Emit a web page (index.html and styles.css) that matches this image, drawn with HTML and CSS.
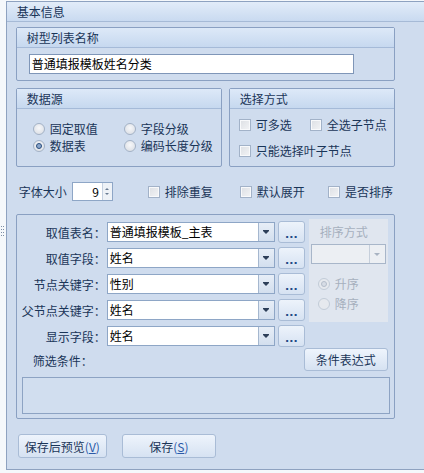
FILE: index.html
```html
<!DOCTYPE html>
<html lang="zh">
<head>
    <meta charset="UTF-8">
    <title>基本信息</title>
    <link rel="stylesheet" href="styles.css">
</head>
<body>
<div class="page">
    <div class="grip">
        <svg width="4" height="14" viewBox="0 0 4 14">
            <rect x="0" y="1" width="1" height="1" fill="#7d8ea6"/>
            <rect x="0" y="4" width="1" height="1" fill="#7d8ea6"/>
            <rect x="0" y="7" width="1" height="1" fill="#7d8ea6"/>
            <rect x="0" y="10" width="1" height="1" fill="#7d8ea6"/>
            <rect x="2" y="1" width="1" height="1" fill="#7d8ea6"/>
            <rect x="2" y="4" width="1" height="1" fill="#7d8ea6"/>
            <rect x="2" y="7" width="1" height="1" fill="#7d8ea6"/>
            <rect x="2" y="10" width="1" height="1" fill="#7d8ea6"/>
        </svg>
    </div>

    <div class="panel">
        <div class="panel-head">基本信息</div>
        <div class="panel-body">

            <div class="group name-group">
                <div class="group-head">树型列表名称</div>
                <div class="group-body">
                    <div class="textbox">普通填报模板姓名分类</div>
                </div>
            </div>

            <div class="pair">
                <div class="group source-group">
                    <div class="group-head">数据源</div>
                    <div class="group-body source-grid">
                        <div class="opt"><span class="radio"></span>固定取值</div>
                        <div class="opt"><span class="radio"></span>字段分级</div>
                        <div class="opt"><span class="radio checked"></span>数据表</div>
                        <div class="opt"><span class="radio"></span>编码长度分级</div>
                    </div>
                </div>
                <div class="group mode-group">
                    <div class="group-head">选择方式</div>
                    <div class="group-body mode-grid">
                        <div class="opt"><span class="check"></span>可多选</div>
                        <div class="opt"><span class="check"></span>全选子节点</div>
                        <div class="opt wide"><span class="check"></span>只能选择叶子节点</div>
                    </div>
                </div>
            </div>

            <div class="font-row">
                <span class="label">字体大小</span>
                <div class="spinner">
                    <span class="spin-value">9</span>
                    <span class="spin-arrows"><i class="up"></i><i class="down"></i></span>
                </div>
                <div class="opt dedupe"><span class="check"></span>排除重复</div>
                <div class="opt expand"><span class="check"></span>默认展开</div>
                <div class="opt sort"><span class="check"></span>是否排序</div>
            </div>

            <div class="group field-group">
                <div class="field-top">
                    <div class="fields">
                        <span class="field-label">取值表名：</span>
                        <div class="combo"><span class="combo-text">普通填报模板_主表</span><span class="combo-btn"></span></div>
                        <button class="dots">...</button>

                        <span class="field-label">取值字段：</span>
                        <div class="combo"><span class="combo-text">姓名</span><span class="combo-btn"></span></div>
                        <button class="dots">...</button>

                        <span class="field-label">节点关键字：</span>
                        <div class="combo"><span class="combo-text">性别</span><span class="combo-btn"></span></div>
                        <button class="dots">...</button>

                        <span class="field-label">父节点关键字：</span>
                        <div class="combo"><span class="combo-text">姓名</span><span class="combo-btn"></span></div>
                        <button class="dots">...</button>

                        <span class="field-label">显示字段：</span>
                        <div class="combo"><span class="combo-text">姓名</span><span class="combo-btn"></span></div>
                        <button class="dots">...</button>
                    </div>

                    <div class="sort-box">
                        <div class="sort-title">排序方式</div>
                        <div class="combo disabled"><span class="combo-text"></span><span class="combo-btn"></span></div>
                        <div class="sort-opts">
                            <div class="opt"><span class="radio checked"></span>升序</div>
                            <div class="opt"><span class="radio"></span>降序</div>
                        </div>
                    </div>
                </div>

                <div class="filter-row">
                    <span class="filter-label">筛选条件：</span>
                    <button class="btn expr-btn">条件表达式</button>
                </div>
                <div class="filter-box"></div>
            </div>

            <div class="actions">
                <button class="btn preview-btn">保存后预览<span class="key">(<u>V</u>)</span></button>
                <button class="btn save-btn">保存<span class="key">(<u>S</u>)</span></button>
            </div>

        </div>
    </div>
</div>
</body>
</html>
```

FILE: styles.css
```css
* {
    box-sizing: border-box;
}
body {
    margin: 0;
    background: #f5f8fb;
    font-family: "Noto Sans CJK SC", "Noto Sans", sans-serif;
    font-size: 12px;
    line-height: 17px;
    color: #1a3558;
    overflow: hidden;
}
.page {
    display: flex;
    padding-top: 1px;
    height: 473px;
}
.grip {
    width: 6px;
    display: flex;
    align-items: center;
    justify-content: center;
    padding-bottom: 10px;
}
.grip svg {
    display: block;
}
.panel {
    width: 430px;
    height: 469px;
    background: #cfdcee;
    border: 1px solid #8ea2c0;
    border-right: none;
}
.panel-head {
    height: 20px;
    padding-left: 10px;
    line-height: 19px;
    background: linear-gradient(#e2ecf9, #c9daf0);
    border-bottom: 1px solid #a6bad6;
}
.panel-body {
    padding: 5px 0 0 9px;
}

/* group boxes */
.group {
    border: 1px solid #8aa0c2;
    border-radius: 2px;
    width: 379px;
}
.group-head {
    height: 20px;
    padding-left: 10px;
    line-height: 19px;
    background: linear-gradient(#dde9f8, #c6d8ef);
    border-bottom: 1px solid #a5bad8;
}
.name-group .group-body {
    padding: 6px 0 6px 12px;
}
.textbox {
    width: 325px;
    height: 20px;
    background: #fff;
    border: 1px solid #7f96b8;
    padding-left: 2px;
    line-height: 18px;
    color: #000;
}

.pair {
    display: flex;
    gap: 7px;
    margin-top: 7px;
}
.pair .group {
    height: 79px;
}
.source-group {
    width: 206px !important;
}
.mode-group {
    width: 166px !important;
}
.source-grid {
    display: grid;
    grid-template-columns: 91px auto;
    padding: 11px 0 0 16px;
}
.mode-grid {
    display: grid;
    grid-template-columns: 71px auto;
    row-gap: 9px;
    padding: 7px 0 0 9px;
}
.mode-grid .wide {
    grid-column: span 2;
}

/* options */
.opt {
    display: flex;
    align-items: center;
    gap: 5px;
    height: 17px;
    white-space: nowrap;
}
.radio {
    width: 12px;
    height: 12px;
    border-radius: 50%;
    border: 1px solid #a3b2c6;
    background: radial-gradient(circle at 50% 40%, #f7f8fa, #d6dae1);
    flex-shrink: 0;
    position: relative;
}
.radio.checked::after {
    content: "";
    position: absolute;
    left: 2px;
    top: 2px;
    width: 6px;
    height: 6px;
    border-radius: 50%;
    box-sizing: border-box;
    border: 1px solid #2a4d7c;
    background: #8aa6cc;
}
.check {
    width: 12px;
    height: 12px;
    border: 1px solid #a2b2c8;
    background: linear-gradient(135deg, #dcdfe4, #f3f4f6);
    box-shadow: inset 0 0 0 1px #f8f9fb;
    flex-shrink: 0;
}

/* font size row */
.font-row {
    display: flex;
    align-items: center;
    margin-top: 15px;
    padding-left: 3px;
    height: 19px;
}
.font-row .label {
    margin-right: 5px;
}
.spinner {
    display: flex;
    width: 41px;
    height: 19px;
    border: 1px solid #8ea6c6;
    background: #fff;
}
.spin-value {
    flex: 1;
    text-align: right;
    padding-right: 3px;
    line-height: 17px;
    color: #000;
}
.spin-arrows {
    width: 10px;
    border-left: 1px solid #c5d1e1;
    background: #eef2f7;
    display: flex;
    flex-direction: column;
    align-items: center;
    justify-content: center;
    gap: 3px;
}
.spin-arrows i {
    width: 0;
    height: 0;
    border-left: 2px solid transparent;
    border-right: 2px solid transparent;
}
.spin-arrows .up {
    border-bottom: 2px solid #6a7c94;
}
.spin-arrows .down {
    border-top: 2px solid #6a7c94;
}
.dedupe {
    margin-left: 35px;
}
.expand {
    margin-left: 27px;
}
.sort {
    margin-left: 23px;
}

/* field group */
.field-group {
    margin-top: 13px;
    height: 205px;
}
.field-top {
    display: flex;
    align-items: flex-start;
}
.fields {
    display: grid;
    grid-template-columns: 87px 168px 27px;
    grid-auto-rows: 22px;
    column-gap: 3px;
    row-gap: 4px;
    padding-top: 6px;
    align-items: center;
}
.field-label {
    text-align: right;
    white-space: nowrap;
    margin-right: -2px;
}
.combo {
    display: flex;
    height: 20px;
    background: #fff;
    border: 1px solid #8ea6c6;
}
.combo-text {
    flex: 1;
    padding-left: 2px;
    line-height: 18px;
    color: #000;
    white-space: nowrap;
    overflow: hidden;
}
.combo-btn {
    width: 16px;
    border-left: 1px solid #a5b7cf;
    background: linear-gradient(#e7eef7, #d3dfee);
    display: flex;
    align-items: center;
    justify-content: center;
}
.combo-btn::after {
    content: "";
    width: 0;
    height: 0;
    border-left: 3px solid transparent;
    border-right: 3px solid transparent;
    border-top: 3px solid #2d3f59;
    box-shadow: 0 -1px 0 #2d3f59;
}
.dots {
    width: 27px;
    height: 22px;
    padding: 5px 0 0;
    border: 1px solid #a9bcd6;
    border-radius: 3px;
    background: linear-gradient(#edf3fb, #d6e2f2);
    font-family: "DejaVu Sans", sans-serif;
    font-size: 11px;
    font-weight: bold;
    line-height: 14px;
    color: #1f4a86;
    letter-spacing: 0;
}

.sort-box {
    width: 79px;
    height: 103px;
    margin: 4px 0 0 4px;
    background: #e0e6ef;
    padding: 4px 2px 0;
}
.sort-title {
    padding-left: 9px;
    color: #a6b0be;
    height: 21px;
}
.combo.disabled {
    width: 75px;
    background: #eceff3;
    border-color: #a8b6c9;
}
.combo.disabled .combo-btn {
    background: #eceff3;
    border-left-color: #c6cfdb;
}
.combo.disabled .combo-btn::after {
    border-top-color: #a8b3c2;
    box-shadow: none;
}
.sort-opts {
    padding: 11px 0 0 7px;
    display: flex;
    flex-direction: column;
    gap: 3px;
    color: #a6b0be;
}
.sort-opts .radio {
    border-color: #c2ccd8;
    background: #e6e9ee;
}
.sort-opts .radio.checked::after {
    border-color: #b4bdca;
    background: #d7dde6;
}

.filter-row {
    display: flex;
    justify-content: space-between;
    align-items: center;
    margin-top: 1px;
    padding: 0 6px 0 16px;
    height: 23px;
}
.filter-label {
    padding-top: 2px;
}
.btn {
    height: 23px;
    padding: 0;
    border: 1px solid #a9bcd6;
    border-radius: 3px;
    background: linear-gradient(#eef4fc, #d6e2f2);
    font-family: inherit;
    font-size: 12px;
    color: #1a3558;
}
.expr-btn {
    width: 84px;
}
.filter-box {
    margin: 6px 4px 0 5px;
    height: 37px;
    border: 1px solid #8da3c3;
    background: #d1deef;
}

.actions {
    display: flex;
    gap: 15px;
    margin: 15px 0 0 2px;
}
.actions .btn {
    height: 24px;
}
.preview-btn {
    width: 89px;
}
.save-btn {
    width: 94px;
}
.key {
    color: #2b5aa8;
}
```
